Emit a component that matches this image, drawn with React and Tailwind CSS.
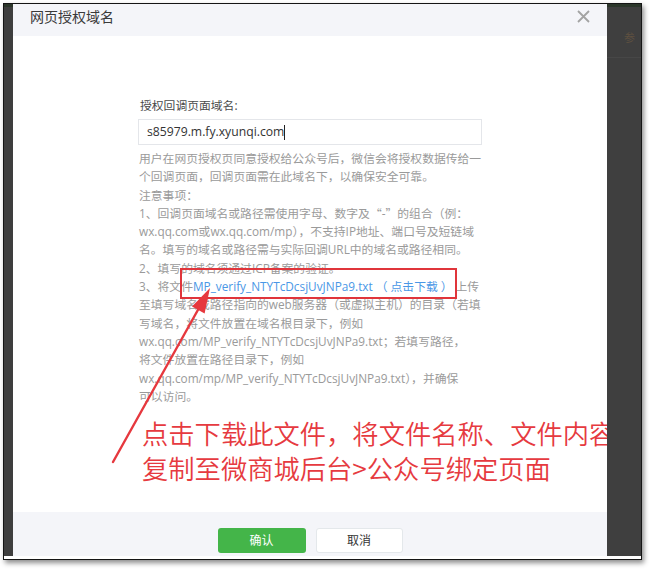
import React from "react";

const LINK = "LINK";
const QUOTE = "QUOTE";
const lines = [
  "用户在网页授权页同意授权给公众号后，微信会将授权数据传给一",
  "个回调页面，回调页面需在此域名下，以确保安全可靠。",
  "注意事项：",
  QUOTE,
  "wx.qq.com或wx.qq.com/mp），不支持IP地址、端口号及短链域",
  "名。填写的域名或路径需与实际回调URL中的域名或路径相同。",
  "2、填写的域名须通过ICP备案的验证。",
  LINK,
  "至填写域名或路径指向的web服务器（或虚拟主机）的目录（若填",
  "写域名，将文件放置在域名根目录下，例如",
  "wx.qq.com/MP_verify_NTYTcDcsjUvJNPa9.txt；若填写路径，",
  "将文件放置在路径目录下，例如",
  "wx.qq.com/mp/MP_verify_NTYTcDcsjUvJNPa9.txt），并确保",
  "可以访问。",
];

function Line({ l }) {
  if (l === LINK) {
    return (
      <div className="whitespace-nowrap">
        3、将文件
        <span className="text-[#4a97e6]">
          MP_verify_NTYTcDcsjUvJNPa9.txt<span className="mx-[3px]">（</span>点击下载<span className="mx-[3px]">）</span>
        </span>
        上传
      </div>
    );
  }
  if (l === QUOTE) {
    return (
      <div className="whitespace-nowrap">
        1、回调页面域名或路径需使用字母、数字及
        <span className="font-['Noto_Sans_CJK_SC',sans-serif]">“</span>-
        <span className="font-['Noto_Sans_CJK_SC',sans-serif]">”</span>的组合（例：
      </div>
    );
  }
  return <div className="whitespace-nowrap">{l}</div>;
}

export default function App() {
  return (
    <div className="relative w-[650px] h-[570px] bg-white overflow-hidden font-['Open_Sans','Noto_Sans_CJK_SC',sans-serif]">
      <div className="ml-[3px] pt-[3px]">
        <div className="w-[639px] border border-[#151515] bg-white shadow-[2px_3px_5px_rgba(0,0,0,0.45)]">
          <div className="flex h-[552px]">
            {/* left dark strip */}
            <div className="w-[9px] bg-[#3e3e3e] flex flex-col">
              <div className="h-[3px] bg-[#2c372b]" />
            </div>
            {/* modal */}
            <div className="w-[594px] flex flex-col">
              <div className="h-[32px] bg-[#f4f5f9] flex justify-between items-start pl-[17px] pr-[17px]">
                <div className="pt-[4px] text-[14px] leading-[18px] text-[#3a3a3a]">网页授权域名</div>
                <svg className="mt-[6px]" width="13" height="13" viewBox="0 0 13 13">
                  <path d="M1 1 L12 12 M12 1 L1 12" stroke="#a3a3a3" strokeWidth="1.8" fill="none" />
                </svg>
              </div>
              <div className="h-[476px] bg-white flex justify-center pt-[60px]">
                <div className="w-[344px] flex flex-col">
                  <div className="text-[11.8px] leading-[18px] text-[#4a4a4a] pl-[2px]">授权回调页面域名:</div>
                  <div className="mt-[5px] h-[26px] border border-[#e4e6ea] flex items-center pl-[8px]">
                    <span className="text-[12.2px] text-[#333] leading-[16px]">s85979.m.fy.xyunqi.com</span>
                    <span className="inline-block w-[1px] h-[15px] bg-[#222]" />
                  </div>
                  <div className="mt-[4px] text-[11.8px] leading-[18.3px] text-[#9a9a9a] pl-[1px]">
                    {lines.map((l, i) => (
                      <Line key={i} l={l} />
                    ))}
                  </div>
                  <div className="mt-[10px] ml-[4px] text-[26.3px] leading-[35px] text-[#e63a40] whitespace-nowrap font-['Noto_Sans_CJK_SC',sans-serif] font-[350]">
                    <div>点击下载此文件，将文件名称、文件内容</div>
                    <div>复制至微商城后台&gt;公众号绑定页面</div>
                  </div>
                </div>
              </div>
              <div className="h-[44px] bg-[#f4f5f9] flex justify-center items-start pt-[16px] gap-[10px]">
                <div className="w-[88px] h-[25px] rounded-[3px] bg-[#44b549] text-white text-[12px] flex items-center justify-center">确认</div>
                <div className="w-[87px] h-[25px] rounded-[3px] bg-white border border-[#e4e8eb] text-[#353535] text-[12px] flex items-center justify-center">取消</div>
              </div>
            </div>
            {/* right dark strip */}
            <div className="w-[34px] bg-[#3f3f3f] flex flex-col">
              <div className="h-[3px] bg-[#2c372b]" />
              <div className="h-[51px] border-b border-[#474747] pl-[17px] pt-[17px]">
                <span className="text-[11px] leading-[12px] text-[#5e5040]">参</span>
              </div>
            </div>
          </div>
          <div className="h-[3px] bg-white" />
        </div>
      </div>

      {/* red highlight box */}
      <div className="absolute left-[180px] top-[268px] w-[277px] h-[31px] border-[2.5px] border-[#e0353b]" />

      {/* red arrow */}
      <svg className="absolute left-0 top-0" width="650" height="570" viewBox="0 0 650 570">
        <line x1="113" y1="462" x2="199" y2="308" stroke="#e6383e" strokeWidth="2.4" strokeLinecap="round" />
        <polygon points="210,288 204.6,313.6 192,306.4" fill="#e6383e" />
      </svg>
    </div>
  );
}
